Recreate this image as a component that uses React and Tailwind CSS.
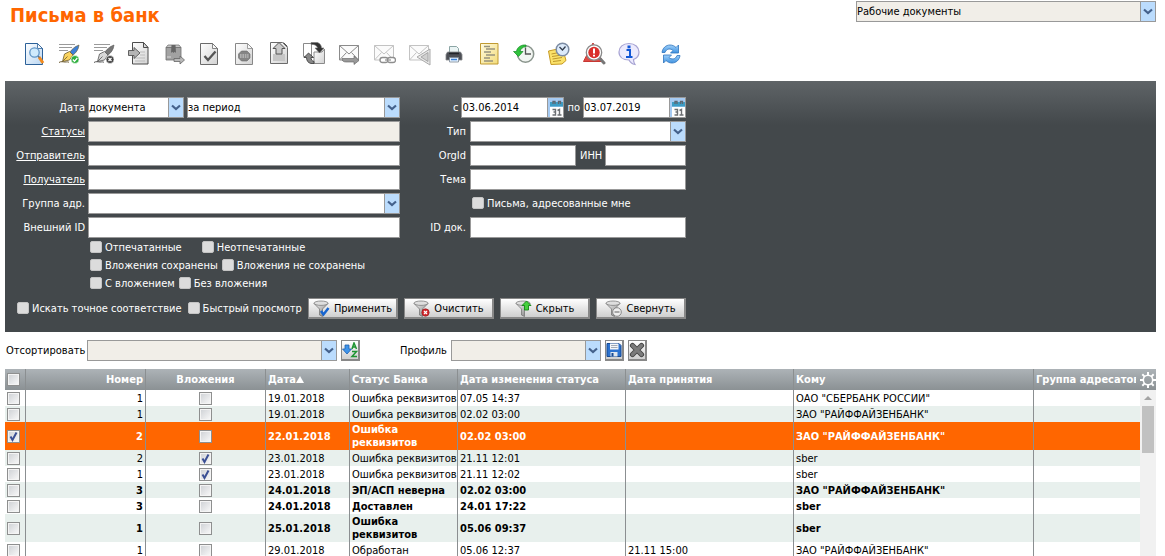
import { useState } from 'react';

const SORT_COLUMNS = [
    { key: 'number', title: 'Номер', width: 'w-[120px]', align: 'text-right' },
    { key: 'attach', title: 'Вложения', width: 'w-[120px]', align: 'text-center' },
    { key: 'date', title: 'Дата', width: 'w-[84px]', align: 'text-left' },
    { key: 'status', title: 'Статус Банка', width: 'w-[108px]', align: 'text-left' },
    { key: 'changed', title: 'Дата изменения статуса', width: 'w-[168px]', align: 'text-left' },
    { key: 'accepted', title: 'Дата принятия', width: 'w-[168px]', align: 'text-left' },
    { key: 'to', title: 'Кому', width: 'w-[240px]', align: 'text-left' },
];

const LETTERS = [
    { id: 1, number: 1, attach: false, date: '19.01.2018', status: 'Ошибка реквизитов', changed: '07.05 14:37', to: 'ОАО "СБЕРБАНК РОССИИ"' },
    { id: 2, number: 1, attach: false, date: '19.01.2018', status: 'Ошибка реквизитов', changed: '02.02 03:00', to: 'ЗАО "РАЙФФАЙЗЕНБАНК"' },
    { id: 3, number: 2, attach: false, date: '22.01.2018', status: 'Ошибка реквизитов', changed: '02.02 03:00', to: 'ЗАО "РАЙФФАЙЗЕНБАНК"', unread: true },
    { id: 4, number: 2, attach: true, date: '23.01.2018', status: 'Ошибка реквизитов', changed: '21.11 12:01', to: 'sber' },
    { id: 5, number: 1, attach: true, date: '23.01.2018', status: 'Ошибка реквизитов', changed: '21.11 12:02', to: 'sber' },
    { id: 6, number: 3, attach: false, date: '24.01.2018', status: 'ЭП/АСП неверна', changed: '02.02 03:00', to: 'ЗАО "РАЙФФАЙЗЕНБАНК"', unread: true },
    { id: 7, number: 3, attach: false, date: '24.01.2018', status: 'Доставлен', changed: '24.01 17:22', to: 'sber', unread: true },
    { id: 8, number: 1, attach: false, date: '25.01.2018', status: 'Ошибка реквизитов', changed: '05.06 09:37', to: 'sber', unread: true },
    { id: 9, number: 1, attach: false, date: '29.01.2018', status: 'Обработан', changed: '05.06 12:37', accepted: '21.11 15:00', to: 'ЗАО "РАЙФФАЙЗЕНБАНК"' },
];

/* ---------- icons ---------- */

const Gradients = () => (
    <svg width="0" height="0" className="absolute" aria-hidden="true">
        <defs>
            <linearGradient id="paper" x1="0" y1="0" x2="1" y2="1">
                <stop offset="0" stopColor="#ffffff" />
                <stop offset="1" stopColor="#d2d2d2" />
            </linearGradient>
            <linearGradient id="bluePaper" x1="0" y1="0" x2="1" y2="1">
                <stop offset="0" stopColor="#ffffff" />
                <stop offset="1" stopColor="#b9d6f2" />
            </linearGradient>
            <linearGradient id="steel" x1="0" y1="0" x2="1" y2="1">
                <stop offset="0" stopColor="#f4f4f4" />
                <stop offset="1" stopColor="#777777" />
            </linearGradient>
            <linearGradient id="refreshBlue" x1="0" y1="0" x2="0" y2="1">
                <stop offset="0" stopColor="#9fd0fa" />
                <stop offset="1" stopColor="#3f92e0" />
            </linearGradient>
            <linearGradient id="note" x1="0" y1="0" x2="1" y2="1">
                <stop offset="0" stopColor="#fffbe0" />
                <stop offset="1" stopColor="#f3dc7a" />
            </linearGradient>
        </defs>
    </svg>
);

const Sheet = ({ x = 3.5, y = 1.5, stroke = '#6b6b6b', fill = 'url(#paper)' }) => (
    <>
        <path d={`M${x} ${y}h12l5 5v16h-17z`} fill={fill} stroke={stroke} />
        <path d={`M${x + 12} ${y}v5h5z`} fill="#f8f8f8" stroke={stroke} strokeWidth=".8" />
    </>
);

const Pen = ({ nib, body, line, badge }) => (
    <>
        <path d="M2 2.5h16M2 5.5h13M2 8.5h9" stroke="#9a9a9a" strokeWidth="1.2" />
        <path d="M22 3c-4 1.500-7 4-9 7l3 3c3-2 5.500-5.500 6-10z" fill={body} stroke={line} strokeWidth=".6" />
        <path d="M12.500 9.500l-5 2.500-2 7.500 7-1.500 3.500-5z" fill={nib} stroke={line} strokeWidth=".8" />
        <path d="M5.500 19.500l5-5" stroke={line} strokeWidth=".8" />
        <path d="M2 20.500c2-1.500 4-.5 6-.5s3-.5 4 .5" fill="none" stroke={line} />
        <circle cx="18" cy="17.500" r="4" fill={badge} stroke="#fff" strokeWidth=".6" />
    </>
);

const Envelope = ({ stroke }) => (
    <>
        <path d="M2.500 3.500h19v14.500h-19z" fill="#fbfbfb" stroke={stroke} />
        <path d="M2.500 3.500l9.500 8.500 9.500-8.500M2.500 18l7-7.500M21.500 18l-7-7.500" fill="none" stroke={stroke} />
    </>
);

const TOOLS = [
    {
        label: 'Просмотр', art: (
            <>
                <Sheet stroke="#2c6199" fill="url(#bluePaper)" />
                <path d="M17 15l4 6" stroke="#f28a1d" strokeWidth="3" />
                <path d="M15.500 13.500l2 2" stroke="#5b6f83" strokeWidth="1.500" />
                <circle cx="12.500" cy="10.500" r="4.700" fill="#cfeafc" stroke="#6095c6" strokeWidth="1.300" />
            </>
        ),
    },
    {
        label: 'Подписать', art: (
            <>
                <Pen nib="#fbd45e" body="#3d7fd6" line="#6b5a2e" badge="#2cae3c" />
                <path d="M15.800 17.500l1.700 1.800 2.800-3.300" fill="none" stroke="#fff" strokeWidth="1.300" />
            </>
        ),
    },
    {
        label: 'Снять подпись', art: (
            <>
                <Pen nib="#d8d8d8" body="#777" line="#555" badge="#444" />
                <path d="M16.500 16l3 3M19.500 16l-3 3" stroke="#fff" strokeWidth="1.200" />
            </>
        ),
    },
    {
        label: 'Импорт', art: (
            <>
                <path d="M5.500.5h11l4.500 5v16.500H5.500z" fill="url(#paper)" stroke="#4d4d4d" />
                <path d="M16.500.5v5H21z" fill="#ddd" stroke="#4d4d4d" />
                <path d="M13 10h5M13 13h5M8 16h10M8 19h10" stroke="#bbb" />
                <path d="M1.500 8.500h5.500V5.500l6 5.500-6 5.500v-3H1.500z" fill="#b5b5b5" stroke="#555" strokeWidth=".9" />
            </>
        ),
    },
    {
        label: 'В архив', art: (
            <>
                <path d="M4 5.500l2-2.500h11l2 2.500z" fill="#c6c6c6" stroke="#777" strokeWidth=".8" />
                <path d="M4 5.500h15V18H4z" fill="#a2a2a2" stroke="#707070" strokeWidth=".8" />
                <path d="M9.500 3h4l.5 8-1.300-1.200-1.200 1.200-1.200-1.200L9 11z" fill="#666" />
                <path d="M5 15h4" stroke="#d8d8d8" />
                <path d="M12 16.500h6v-2.500l4.500 4-4.500 4v-2.500h-6z" fill="#b8b8b8" stroke="#666" strokeWidth=".8" />
            </>
        ),
    },
    {
        label: 'Проверить', art: (
            <>
                <Sheet />
                <path d="M7.500 14l3.500 4 7.500-8.500" fill="none" stroke="#555" strokeWidth="2.300" />
            </>
        ),
    },
    {
        label: 'Отозвать', art: (
            <>
                <Sheet stroke="#888" />
                <path d="M9.500 9h5.500l3 3v4l-3 3H9.500l-3-3v-4z" fill="#858585" stroke="#6a6a6a" strokeWidth=".6" />
                <path d="M8 13h8.500M8 15h8.500" fill="none" stroke="#dcdcdc" strokeDasharray="1.600 .8" />
            </>
        ),
    },
    {
        label: 'Отправить', art: (
            <>
                <path d="M3.500.5h12l5 5v16h-17z" fill="url(#paper)" stroke="#6b6b6b" />
                <path d="M6 12h12v7H6z" fill="#c6c6c6" />
                <path d="M12 .5l6 6h-3v5.500H9V6.500H6z" fill="#cacaca" stroke="#555" />
                <path d="M16.500 .5l4 4" stroke="#555" />
            </>
        ),
    },
    {
        label: 'Обмен', art: (
            <>
                <path d="M1.500 1.500h8v13h-8z" fill="#fff" stroke="#8a8a8a" />
                <path d="M12 10h8l2.500-3v14.500H12z" fill="url(#paper)" stroke="#8a8a8a" />
                <path d="M9 .5h6.500c3 1 4 3.500 4 5.500H22l-4.500 5-4.500-5h2.500c-.5-2.500-3-4-6.500-3.500z" fill="#333" stroke="#777" strokeWidth=".6" />
                <path d="M6.500 11l5 4.500H9c0 2 1 3.500 3 4v2H9c-3-.5-4.500-3-4.500-6H2z" fill="#888" stroke="#333" strokeWidth=".8" />
            </>
        ),
    },
    {
        label: 'Письмо', art: (
            <>
                <Envelope stroke="#8b8b8b" />
                <path d="M5 16.500h12v-2.500l5 4.500-5 4v-2.500H9c-3 0-4-1.500-4-3.500z" fill="#999" stroke="#5e5e5e" strokeWidth=".6" />
            </>
        ),
    },
    {
        label: 'Связанные письма', art: (
            <>
                <Envelope stroke="#c3c3c3" />
                <rect x="8" y="15.500" width="8" height="5" rx="2.500" fill="#fff" stroke="#8e8e8e" strokeWidth="1.300" />
                <rect x="15.500" y="15.500" width="8" height="5" rx="2.500" fill="#fff" stroke="#8e8e8e" strokeWidth="1.300" />
                <path d="M13 18h6" stroke="#8e8e8e" strokeWidth="1.200" />
            </>
        ),
    },
    {
        label: 'Ответить', art: (
            <>
                <Envelope stroke="#c3c3c3" />
                <path d="M23 7v16L10 15z" fill="#e8e8e8" stroke="#aaa" />
                <path d="M21 10.500v9L14 15z" fill="#d0d0d0" stroke="#999" strokeWidth=".8" />
            </>
        ),
    },
    {
        label: 'Печать', art: (
            <>
                <path d="M7.500 4.500h7l2 2v5h-9z" fill="#eaf4f4" stroke="#8ba5a5" />
                <path d="M5.500 10h13l1.500 2.500V18H4v-5.500z" fill="#4c4f55" stroke="#85888c" strokeWidth=".8" />
                <path d="M7 11.500h10" stroke="#22252a" strokeWidth="1.500" />
                <path d="M7.500 15.500h9v4.500h-9z" fill="#e8f3ff" stroke="#7c8894" strokeWidth=".8" />
                <path d="M9 17.500h6" stroke="#3b83d9" strokeWidth="1.500" />
            </>
        ),
    },
    {
        label: 'Журнал', art: (
            <>
                <path d="M3.500 1.500h17.500v20.500h-17.500z" fill="url(#note)" stroke="#c09a32" />
                <path d="M7 4.500h6M9 7h9M7 10h7M9 13h9M7 16h6M7 19h9" stroke="#96937f" strokeWidth="1.300" />
            </>
        ),
    },
    {
        label: 'История', art: (
            <>
                <circle cx="13.500" cy="12" r="8.200" fill="#f2f5f2" stroke="#8a958d" strokeWidth="1.500" />
                <path d="M13.500 5.500V12H19" fill="none" stroke="#555" strokeWidth="1.300" />
                <path d="M14 3C9.500 2.500 5 5 4.500 9.500H1.500L6.500 14.500l4.500-5H8C8.500 7 10.500 5 14 4.600z" fill="#2fc23c" stroke="#148a24" strokeWidth=".7" />
            </>
        ),
    },
    {
        label: 'Отложить', art: (
            <>
                <path d="M1.500 9l14-3 3.500 12.500-4 3.500-11 .5z" fill="#fbe26a" stroke="#c79a22" />
                <path d="M4.500 12l10-2M5 14.500l10-1.500M5.500 17l9.500-1.500M6 19.500l8-1" stroke="#b78f25" strokeWidth=".9" />
                <circle cx="15.500" cy="7.500" r="6.300" fill="#dceafa" stroke="#7c8ca4" strokeWidth="1.500" />
                <path d="M12.500 5l3 3 3-3.500" fill="none" stroke="#333d4d" strokeWidth="1.300" />
            </>
        ),
    },
    {
        label: 'Ошибки', art: (
            <>
                <path d="M11 1l9.500 18.500h-19z" fill="#e04a44" stroke="#c73732" />
                <path d="M17 15.500l5 5.500" stroke="#777" strokeWidth="3" strokeLinecap="round" />
                <circle cx="12" cy="10.500" r="7.700" fill="#fff" stroke="#8a8a8a" strokeWidth="1.300" />
                <circle cx="12" cy="10.500" r="5.700" fill="#d92f2b" />
                <path d="M12 6.500v5M12 12.800v1.700" stroke="#fff" strokeWidth="2" />
            </>
        ),
    },
    {
        label: 'Информация', art: (
            <>
                <path d="M12 1.500c6 0 10 3.700 10 8.500 0 4-2.500 6.500-5.500 7.500 0 2 .5 3.500 1.500 5-3-.5-5-2.500-6-4.500C6 18 2 15 2 10s4-8.500 10-8.500z" fill="#eceafd" stroke="#a7a3d3" strokeWidth="1.200" />
                <path d="M12 3.500v2.800" stroke="#1257d6" strokeWidth="3" />
                <path d="M9.500 8h3.500v6.500M9 15h6.500" fill="none" stroke="#1257d6" strokeWidth="2" />
            </>
        ),
    },
];

const RefreshArt = () => (
    <>
        <path d="M4 10.500C4.500 6 8 3 12 3c2.500 0 4.500 1 6 2.500L20.500 3v8h-8L15 8.500C13 6.500 8.500 6 7 10.500z" fill="url(#refreshBlue)" stroke="#2f74bd" strokeWidth=".8" />
        <path d="M22 13.500C21.500 18 18 21 14 21c-2.500 0-4.500-1-6-2.500L5.500 21v-8h8L11 15.500c2 2 6.500 2.500 8-2z" fill="url(#refreshBlue)" stroke="#2f74bd" strokeWidth=".8" />
    </>
);

const Funnel = ({ children }) => (
    <svg viewBox="0 0 17 17" className="size-[17px] shrink-0" aria-hidden="true">
        <path d="M1 3.500L6.500 9v6l3 1.500V9L15 3.500z" fill="url(#steel)" stroke="#777" strokeWidth=".8" />
        <ellipse cx="8" cy="3.200" rx="7" ry="2.200" fill="#dedede" stroke="#7d7d7d" strokeWidth=".8" />
        {children}
    </svg>
);

const CalendarArt = () => (
    <svg viewBox="0 0 15 19" className="h-[19px] w-[15px]" aria-hidden="true">
        <path d="M0 0h15v19H0z" fill="#a6cbf3" />
        <path d="M2 9h13v10H2z" fill="#fff" />
        <path d="M2 4h13v4.500H2z" fill="#3d9cc4" />
        <path d="M5 6V3.500h2V6M10.500 6V3.500h2V6" fill="none" stroke="#5f6670" strokeWidth="1.300" />
        <path d="M4.500 11.500h3v5.500h-3M5.500 14h2M9.500 12.500l2-1v5.500M9.500 17h4" fill="none" stroke="#6c6f73" strokeWidth="1.400" />
    </svg>
);

/* ---------- controls ---------- */

const Select = ({ id, label, options = [''], width, muted }) => (
    <div className={`relative h-[21px] border border-[#999] ${width} ${muted ? 'bg-[#f1eee8]' : 'bg-white'}`}>
        <select id={id} aria-label={label} className="block h-full w-full appearance-none bg-transparent pr-4 text-black outline-none">
            {options.map(option => <option key={option}>{option}</option>)}
        </select>
        <span className="pointer-events-none absolute inset-y-0 right-0 flex w-[15px] items-center justify-center border-l border-[#999] bg-[#bbdcfd]">
            <svg viewBox="0 0 10 7" className="h-[7px] w-[10px]" aria-hidden="true">
                <path d="M1 1.500l4 3.500 4-3.500" fill="none" stroke="#44618c" strokeWidth="2.200" />
            </svg>
        </span>
    </div>
);

const TextInput = ({ id, width, ...rest }) => (
    <input id={id} type="text" className={`h-[21px] border border-[#999] bg-white text-black outline-none disabled:bg-[#f1eee8] ${width}`} {...rest} />
);

const DateInput = ({ id, value, label }) => (
    <div className="flex h-[21px] w-[103px] border border-[#999] bg-white">
        <input id={id} type="text" aria-label={label} defaultValue={value} className="min-w-0 flex-1 text-black outline-none" />
        <button type="button" aria-label="Календарь" className="border-l border-[#999]">
            <CalendarArt />
        </button>
    </div>
);

const Check = ({ label }) => (
    <label className="flex items-start gap-[3px] whitespace-nowrap">
        <input type="checkbox" className="size-3 appearance-none rounded-xs border border-[#c4c4c4] bg-[#dcdcdc] checked:bg-[#44618c]" />
        {label}
    </label>
);

const GridCheck = ({ checked, label, onChange }) => (
    <span className="relative inline-block size-[13px] align-top">
        <input
            type="checkbox"
            checked={checked}
            onChange={onChange}
            readOnly={!onChange}
            aria-label={label}
            className="block size-[13px] appearance-none border border-[#8e8f8f] bg-linear-to-br from-[#cdd0d4] to-[#fafafa] shadow-[inset_0_0_0_1px_#f4f4f4]"
        />
        {checked && (
            <svg viewBox="0 0 13 13" className="pointer-events-none absolute inset-0 size-[13px]" aria-hidden="true">
                <path d="M3.500 6.500l2 3.500 4-7.500" fill="none" stroke="#3a4f94" strokeWidth="2" />
            </svg>
        )}
    </span>
);

const Row = ({ label, htmlFor, link, children }) => (
    <div className="flex items-center gap-[3px]">
        {link ? (
            <a href="#" className="w-20 shrink-0 text-right underline">{label}</a>
        ) : (
            <label htmlFor={htmlFor} className="w-20 shrink-0 text-right">{label}</label>
        )}
        {children}
    </div>
);

const FilterButton = ({ label, children }) => (
    <button type="button" className="flex h-[21px] w-[90px] items-center justify-center gap-1 border border-r-2 border-b-2 border-[#888] bg-linear-to-b from-white to-[#cfcfcf] text-black">
        <Funnel>{children}</Funnel>
        {label}
    </button>
);

const SquareButton = ({ label, children }) => (
    <button type="button" aria-label={label} className="flex h-[21px] w-[19px] items-center justify-center border border-r-2 border-b-2 border-[#888] bg-linear-to-b from-white to-[#cfcfcf]">
        <svg viewBox="0 0 16 16" className="size-4 shrink-0" aria-hidden="true">{children}</svg>
    </button>
);

const Filters = () => (
    <form className="shrink-0 bg-linear-to-b from-[#5f6467] to-[#43484b] to-[44px] pt-4 pb-[13px] text-white">
        <div className="flex">
            <div className="flex w-[395px] flex-col gap-[3px]">
                <Row label="Дата" htmlFor="dateKind">
                    <Select id="dateKind" options={['документа']} width="w-24" />
                    <Select label="Период" options={['за период']} width="flex-1" />
                </Row>
                <Row label="Статусы" link><TextInput aria-label="Статусы" disabled width="flex-1" /></Row>
                <Row label="Отправитель" link><TextInput aria-label="Отправитель" width="flex-1" /></Row>
                <Row label="Получатель" link><TextInput aria-label="Получатель" width="flex-1" /></Row>
                <Row label="Группа адр." htmlFor="group"><Select id="group" width="flex-1" /></Row>
                <Row label="Внешний ID" htmlFor="extId"><TextInput id="extId" width="flex-1" /></Row>
            </div>
            <div className="flex w-[286px] flex-col gap-[3px]">
                <div className="flex items-center justify-end gap-[3px]">
                    <label htmlFor="from">с</label>
                    <DateInput id="from" value="03.06.2014" />
                    <label htmlFor="to">по</label>
                    <DateInput id="to" value="03.07.2019" />
                </div>
                <div className="flex items-center justify-end gap-1">
                    <label htmlFor="type">Тип</label>
                    <Select id="type" width="w-[216px]" />
                </div>
                <div className="flex items-center justify-end gap-1">
                    <label htmlFor="org">OrgId</label>
                    <TextInput id="org" width="w-[106px]" />
                    <label htmlFor="inn" className="w-[21px] flex-none">ИНН</label>
                    <TextInput id="inn" width="w-[81px]" />
                </div>
                <div className="flex items-center justify-end gap-1">
                    <label htmlFor="subject">Тема</label>
                    <TextInput id="subject" width="w-[216px]" />
                </div>
                <div className="flex h-[21px] items-center pl-[72px]"><Check label="Письма, адресованные мне" /></div>
                <div className="flex items-center justify-end gap-1">
                    <label htmlFor="docId">ID док.</label>
                    <TextInput id="docId" width="w-[216px]" />
                </div>
            </div>
        </div>
        <div className="mt-[3px] flex flex-col gap-1 pl-[85px] leading-[14px]">
            <div className="flex gap-5">
                <Check label="Отпечатанные" />
                <Check label="Неотпечатанные" />
            </div>
            <div className="flex gap-1">
                <Check label="Вложения сохранены" />
                <Check label="Вложения не сохранены" />
            </div>
            <div className="flex gap-1">
                <Check label="С вложением" />
                <Check label="Без вложения" />
            </div>
        </div>
        <div className="mt-[7px] flex w-[681px] items-center pl-3">
            <div className="flex gap-[6px]">
                <Check label="Искать точное соответствие" />
                <Check label="Быстрый просмотр" />
            </div>
            <div className="ml-auto flex gap-[6px]">
                <FilterButton label="Применить">
                    <path d="M8 11l2.500 3.500L15.500 8" fill="none" stroke="#1765cf" strokeWidth="2.500" />
                </FilterButton>
                <FilterButton label="Очистить">
                    <circle cx="12.500" cy="12.500" r="3.700" fill="#d3272c" stroke="#8d171b" strokeWidth=".6" />
                    <path d="M11 11l3 3M14 11l-3 3" stroke="#fff" strokeWidth="1.200" />
                </FilterButton>
                <FilterButton label="Скрыть">
                    <path d="M11.500 1l4.500 4.500h-2.500V10h-4V5.500H7z" fill="#45d03c" stroke="#138614" strokeWidth=".9" />
                </FilterButton>
                <FilterButton label="Свернуть">
                    <circle cx="12" cy="12" r="4.300" fill="#eee" stroke="#808080" strokeWidth=".9" />
                    <path d="M9.500 12h5" stroke="#777" strokeWidth="1.200" />
                </FilterButton>
            </div>
        </div>
    </form>
);

const App = () => {
    const [selected, setSelected] = useState([3]);

    const toggle = (id) => {
        setSelected(selected.includes(id) ? selected.filter(s => s !== id) : [...selected, id]);
    };

    const rowStyle = (letter, index) => {
        if (selected.includes(letter.id)) return 'bg-[#ff6600] text-white';
        return index % 2 ? 'bg-[#e8f0ed]' : 'bg-white';
    };

    return (
        <div className="flex h-screen flex-col overflow-hidden bg-white pr-[9px] pl-[5px] font-['Tahoma','DejaVu_Sans_Condensed','DejaVu_Sans',sans-serif] text-[11px] leading-[13px] text-black">
            <Gradients />
            <header className="flex h-8 shrink-0 items-start justify-between pt-px">
                <h1 className="pl-[5px] text-xl leading-7 font-bold text-[#ff6600]">Письма в банк</h1>
                <Select label="Папка" options={['Рабочие документы']} width="w-[300px]" muted />
            </header>

            <div className="flex h-[49px] shrink-0 items-start pt-[10px] pl-[11px]">
                {TOOLS.map(tool => (
                    <button key={tool.label} type="button" title={tool.label} aria-label={tool.label} className="flex w-[35px] justify-center">
                        <svg viewBox="0 0 24 24" className="size-6" aria-hidden="true">{tool.art}</svg>
                    </button>
                ))}
                <button type="button" title="Обновить" aria-label="Обновить" className="ml-[6px] flex w-[35px] justify-center">
                    <svg viewBox="0 0 24 24" className="size-6" aria-hidden="true"><RefreshArt /></svg>
                </button>
            </div>

            <Filters />

            <div className="flex shrink-0 items-center py-2">
                <label htmlFor="sort" className="w-[82px] pl-px">Отсортировать</label>
                <Select id="sort" width="w-[250px]" muted />
                <div className="ml-1">
                    <SquareButton label="Порядок сортировки">
                        <path d="M3 3h4v4h2.500L5 12 .5 7H3z" fill="#3f94ea" stroke="#1d5fae" strokeWidth=".8" />
                        <path d="M10 7l2-6 2.500 6M10.500 5h3.500M10 9.500h4.500L10 14.500h5" fill="none" stroke="#1f9432" strokeWidth="1.500" />
                    </SquareButton>
                </div>
                <label htmlFor="profile" className="ml-10 w-[51px]">Профиль</label>
                <Select id="profile" width="w-[150px]" muted />
                <div className="ml-1 flex gap-1">
                    <SquareButton label="Сохранить профиль">
                        <path d="M1 1.500h12l2 2v11H1z" fill="#2c72cf" stroke="#174a93" />
                        <path d="M4 1.500h8.500v6H4z" fill="#f4f6f8" />
                        <path d="M5 3.500h6.500M5 5.500h6.500" stroke="#a3abb5" />
                        <path d="M4.500 10h7v4.500h-7z" fill="#dfe6ee" />
                        <path d="M5.500 11h2v3.500h-2z" fill="#174a93" />
                    </SquareButton>
                    <SquareButton label="Удалить профиль">
                        <path d="M3.500 3.500l9 9M12.500 3.500l-9 9" stroke="#444" strokeWidth="5.200" strokeLinecap="round" />
                        <path d="M3.500 3.500l9 9M12.500 3.500l-9 9" stroke="#7b7b7b" strokeWidth="3.300" strokeLinecap="round" />
                    </SquareButton>
                </div>
            </div>

            <div className="flex min-h-0 flex-1">
                <div className="min-w-0 flex-1 overflow-hidden">
                    <table className="w-full table-fixed border-separate border-spacing-0">
                        <thead>
                            <tr className="h-[21px] bg-linear-to-b from-[#adb3b7] to-[#8b9194] text-white">
                                <th className="w-[21px] border-r border-[#8b8f91] px-[2px] py-0 text-left">
                                    <GridCheck
                                        label="Выбрать все"
                                        checked={selected.length === LETTERS.length}
                                        onChange={() => setSelected(selected.length === LETTERS.length ? [] : LETTERS.map(l => l.id))}
                                    />
                                </th>
                                {SORT_COLUMNS.map(col => (
                                    <th key={col.key} className={`border-r border-[#8b8f91] px-[2px] py-0 font-bold whitespace-nowrap ${col.width} ${col.align}`}>
                                        {col.title}
                                        {col.key === 'date' && (
                                            <svg viewBox="0 0 8 7" className="mb-px inline h-[7px] w-2" aria-hidden="true">
                                                <path d="M4 0l4 7H0z" fill="#fff" />
                                            </svg>
                                        )}
                                    </th>
                                ))}
                                <th className="py-0 pr-1 pl-[2px] text-left font-bold whitespace-nowrap">
                                    <div className="overflow-hidden">Группа адресатов</div>
                                </th>
                            </tr>
                        </thead>
                        <tbody>
                            {LETTERS.map((letter, index) => (
                                <tr key={letter.id} className={`h-4 *:border-r *:border-[#8b8f91] *:px-[2px] *:py-px *:last:border-r-0 ${rowStyle(letter, index)} ${letter.unread ? 'font-bold' : 'whitespace-nowrap'}`}>
                                    <td>
                                        <GridCheck label={`Выбрать письмо ${letter.id}`} checked={selected.includes(letter.id)} onChange={() => toggle(letter.id)} />
                                    </td>
                                    <td className="text-right">{letter.number}</td>
                                    <td className="text-center"><GridCheck label="Вложения" checked={letter.attach} /></td>
                                    <td>{letter.date}</td>
                                    <td>{letter.status}</td>
                                    <td>{letter.changed}</td>
                                    <td>{letter.accepted}</td>
                                    <td>{letter.to}</td>
                                    <td></td>
                                </tr>
                            ))}
                        </tbody>
                    </table>
                </div>
                <div className="flex w-4 flex-col bg-[#f1f1f1]">
                    <button type="button" aria-label="Настройка колонок" className="flex h-[21px] items-center justify-center bg-linear-to-b from-[#adb3b7] to-[#8b9194]">
                        <svg viewBox="0 0 16 16" className="size-4 shrink-0" fill="none" stroke="#fff" aria-hidden="true">
                            <circle cx="8" cy="8" r="4.700" strokeWidth="1.600" />
                            <path d="M8 0v3M8 13v3M0 8h3M13 8h3M2.300 2.300l2.100 2.100M11.600 11.600l2.100 2.100M2.300 13.700l2.100-2.100M11.600 4.400l2.100-2.100" strokeWidth="2" />
                        </svg>
                    </button>
                    <div className="flex h-4 items-center justify-center">
                        <svg viewBox="0 0 8 4" className="h-1 w-2" aria-hidden="true"><path d="M4 0l4 4H0z" fill="#a3a3a3" /></svg>
                    </div>
                    <div className="mx-[2px] h-[47px] bg-[#c1c1c1]" />
                </div>
            </div>
        </div>
    );
};

export default App;
